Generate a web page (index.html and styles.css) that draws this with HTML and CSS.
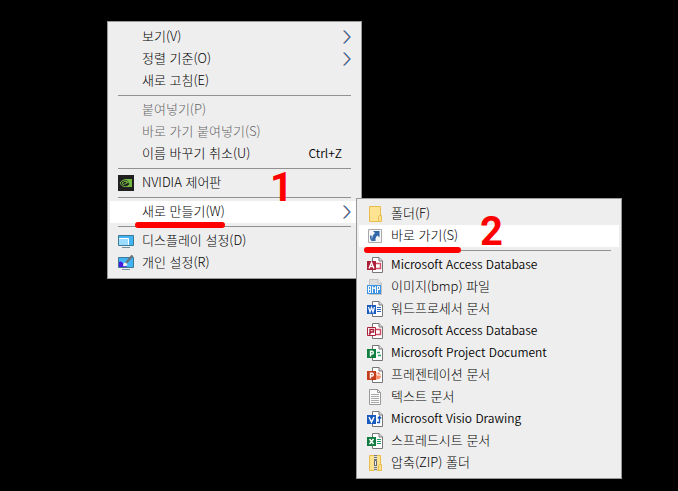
FILE: index.html
```html
<!DOCTYPE html>
<html lang="ko">
<head>
<meta charset="utf-8">
<title>새로 만들기</title>
<link rel="stylesheet" href="styles.css">
</head>
<body>
<svg class="defs" aria-hidden="true">
  <symbol id="chevron" viewBox="0 0 8 14">
    <path d="M0 .5 6 7 0 13.500" fill="none" stroke="#e8a070"/>
    <path d="M1.500 .5 7.500 7 1.500 13.500" fill="none" stroke="#1890f0"/>
    <path d="M.8 .5 6.800 7 .8 13.500" fill="none" stroke="#30285a" stroke-width=".7"/>
  </symbol>
  <symbol id="page" viewBox="0 0 16 16">
    <path d="M5.500 .5H12L15.500 4V15.500H5.500Z" fill="#fff" stroke="#777"/>
    <path d="M12 .5V4H15.500" fill="#ddd" stroke="#777"/>
  </symbol>
</svg>
<main class="desktop">
  <ul class="menu">
    <li><button class="item"><span class="icon"></span><span class="label">보기(V)</span><svg class="arrow"><use href="#chevron"/></svg></button></li>
    <li><button class="item"><span class="icon"></span><span class="label">정렬 기준(O)</span><svg class="arrow"><use href="#chevron"/></svg></button></li>
    <li><button class="item"><span class="icon"></span><span class="label">새로 고침(E)</span></button></li>
    <li class="separator"></li>
    <li><button class="item" disabled><span class="icon"></span><span class="label">붙여넣기(P)</span></button></li>
    <li><button class="item" disabled><span class="icon"></span><span class="label">바로 가기 붙여넣기(S)</span></button></li>
    <li><button class="item"><span class="icon"></span><span class="label">이름 바꾸기 취소(U)</span><span class="label latin shortcut">Ctrl+Z</span></button></li>
    <li class="separator"></li>
    <li><button class="item">
      <svg class="icon" viewBox="0 0 16 16"><path d="M0 0H16V16H0Z" fill="#202020"/><path d="M6 4H14V12H6V11Q9 12 11.500 9L10 7.500Q8 10 6 9.500V8.500Q7.500 9 8.500 7.500Q7.500 6.500 6 7V5.500Q9 5 11.500 8Q9 4.500 6 4.800Z" fill="#76b83f"/><path d="M6 5Q3.500 5.500 2 8Q3.500 11 6 11.500M6 7Q4.500 7 4 8Q4.500 9.500 6 9.500" fill="none" stroke="#76b83f"/></svg>
      <span class="label">NVIDIA 제어판</span></button></li>
    <li class="separator"></li>
    <li class="parent">
      <button class="item active"><span class="icon"></span><span class="label">새로 만들기(W)</span><svg class="arrow"><use href="#chevron"/></svg></button>
      <span class="underline first"></span><strong class="step first">1</strong>
      <ul class="menu submenu">
        <li><button class="item">
          <svg class="icon" viewBox="0 0 16 16"><path d="M2.500 .5H13.500V15.500H2.500Z" fill="#ffe391" stroke="#e9bd4d"/><path d="M11.500 15.500V11L12.500 9.500H14.500V15.500Z" fill="#ffe391" stroke="#e9bd4d"/></svg>
          <span class="label">폴더(F)</span></button></li>
        <li class="parent"><button class="item active">
          <svg class="icon" viewBox="0 0 16 16"><path d="M1.500 1.500H14.500V14.500H1.500Z" fill="#f6f6f6" stroke="#aaa"/><path d="M6 3H12.500V9.500L10.500 7.500Q8 9 8.500 13H5.500Q4 8.500 8 5Z" fill="#3267a8"/><path d="M4 7.500Q3 10.500 5.500 13" fill="none" stroke="#3267a8" stroke-width="1.500"/></svg>
          <span class="label">바로 가기(S)</span></button>
          <span class="underline second"></span><strong class="step second">2</strong></li>
        <li class="separator"></li>
        <li><button class="item">
          <svg class="icon" viewBox="0 0 16 16"><use href="#page"/><path d="M9 6.500H13.500V11.500H9" fill="none" stroke="#d34f6a" stroke-width="1.500"/><path d="M0 4H9V13H0Z" fill="#ac2039"/><path d="M2 11.500 4.500 5.500 7 11.500M3 9.500H6" fill="none" stroke="#fff" stroke-width="1.300"/></svg>
          <span class="label latin">Microsoft Access Database</span></button></li>
        <li><button class="item">
          <svg class="icon" viewBox="0 0 16 16"><path d="M2.500 .5H11L14.500 4V15.500H2.500Z" fill="#ddd" stroke="#c4c4c4"/><path d="M11 .5V4H14.500" fill="#f8f8f8" stroke="#c4c4c4"/><path d="M0 6H14V15H0Z" fill="#3f94e4"/><path d="M1.500 7.500H3.500V13.500H1.500ZM1.500 10.500H4M3.500 7.500V13.500M5.500 14V7.500L7 10 8.500 7.500V14M10.500 14V7.500H12.500V10.500H10.500" fill="none" stroke="#fff"/></svg>
          <span class="label">이미지(bmp) 파일</span></button></li>
        <li><button class="item">
          <svg class="icon" viewBox="0 0 16 16"><use href="#page"/><path d="M10 6.500H14M10 8.500H14M10 10.500H14" stroke="#2969bd"/><path d="M0 4H9V13H0Z" fill="#185abd"/><path d="M1.500 6 3 11 4.500 6.500 6 11 7.500 6" fill="none" stroke="#fff" stroke-width="1.200"/></svg>
          <span class="label">워드프로세서 문서</span></button></li>
        <li><button class="item">
          <svg class="icon" viewBox="0 0 16 16"><use href="#page"/><path d="M9 6.500H13.500V11.500H9" fill="none" stroke="#d34f6a" stroke-width="1.500"/><path d="M.5 4.500H8.500V12.500H.5Z" fill="#fff" stroke="#ac2039"/><path d="M3 11.500V6.500H6.500V9H3M2 11.500 4 9" fill="none" stroke="#ac2039" stroke-width="1.500"/></svg>
          <span class="label latin">Microsoft Access Database</span></button></li>
        <li><button class="item">
          <svg class="icon" viewBox="0 0 16 16"><use href="#page"/><path d="M10 7.500H13M11 10.500H14" stroke="#30a568" stroke-width="1.500"/><path d="M0 4H9V13H0Z" fill="#10803f"/><path d="M3.500 11.500V6.200H5Q6.300 6.200 6.300 7.700Q6.300 9 5 9H3.500" fill="none" stroke="#fff" stroke-width="1.400"/></svg>
          <span class="label latin">Microsoft Project Document</span></button></li>
        <li><button class="item">
          <svg class="icon" viewBox="0 0 16 16"><use href="#page"/><path d="M9 5Q14 5 14 9Q14 12.500 9 12.500Z" fill="#ff8f6b"/><path d="M10 4V8H14" fill="none" stroke="#fff"/><path d="M0 4H9V13H0Z" fill="#c43e1c"/><path d="M3.500 11.500V6.200H5Q6.300 6.200 6.300 7.700Q6.300 9 5 9H3.500" fill="none" stroke="#fff" stroke-width="1.400"/></svg>
          <span class="label">프레젠테이션 문서</span></button></li>
        <li><button class="item">
          <svg class="icon" viewBox="0 0 16 16"><path d="M2.500 .5H10.500L13.500 3.500V15.500H2.500Z" fill="#fafafa" stroke="#999"/><path d="M10.500 .5V3.500H13.500" fill="none" stroke="#999"/><path d="M4 5.500H12M4 7.500H12M4 9.500H12M4 11.500H12M4 13.500H12" stroke="#aaa"/></svg>
          <span class="label">텍스트 문서</span></button></li>
        <li><button class="item">
          <svg class="icon" viewBox="0 0 16 16"><use href="#page"/><path d="M10 11.500H12.500V6M10.800 7.500 12.500 5.500 14.200 7.500" fill="none" stroke="#185abd" stroke-width="1.300"/><path d="M0 4H9V13H0Z" fill="#185abd"/><path d="M2 6 4.500 11 7 6" fill="none" stroke="#fff" stroke-width="1.500"/></svg>
          <span class="label latin">Microsoft Visio Drawing</span></button></li>
        <li><button class="item">
          <svg class="icon" viewBox="0 0 16 16"><use href="#page"/><path d="M10 6.500H14M10 8.500H14M10 10.500H14" stroke="#20a060"/><path d="M0 4H9V13H0Z" fill="#107c41"/><path d="M2.500 6 6.500 11M6.500 6 2.500 11" stroke="#fff" stroke-width="1.500"/></svg>
          <span class="label">스프레드시트 문서</span></button></li>
        <li><button class="item">
          <svg class="icon" viewBox="0 0 16 16"><path d="M2.500 .5H13.500V15.500H2.500Z" fill="#ffe391" stroke="#e9bd4d"/><path d="M11.500 15.500V11L12.500 9.500H14.500V15.500Z" fill="#ffe391" stroke="#e9bd4d"/><path d="M7 0H10V16H7Z" fill="#ddd"/><path d="M8.500 0V16" stroke="#777" stroke-width="3" stroke-dasharray="1 1"/><path d="M7.500 5.500H9.500V10.500H7.500Z" fill="#eee" stroke="#666"/></svg>
          <span class="label">압축(ZIP) 폴더</span></button></li>
      </ul>
    </li>
    <li class="separator"></li>
    <li><button class="item">
      <svg class="icon" viewBox="0 0 16 16"><path d="M.5 2.500H15.500V12.500H.5Z" fill="#42b4f4" stroke="#3d7995"/><path d="M1 5.500H10.500V12H1Z" fill="#9cdcff"/><path d="M1 5.500H10.500V12" fill="none" stroke="#fff"/><path d="M4 14.500H12" stroke="#78909c"/></svg>
      <span class="label">디스플레이 설정(D)</span></button></li>
    <li><button class="item">
      <svg class="icon" viewBox="0 0 16 16"><path d="M.5 2.500H15.500V12.500H.5Z" fill="#42b4f4" stroke="#3d7995"/><path d="M1 7Q4 5 6 10L9 12H1Z" fill="#4b18e0"/><path d="M4 14.500H12" stroke="#78909c"/><path d="M5 11Q5 7.500 8 7L9.500 9Q9 12 5 11Z" fill="#f1f1f1"/><path d="M8 8 14.500 .5" stroke="#687580" stroke-width="2.500"/></svg>
      <span class="label">개인 설정(R)</span></button></li>
  </ul>
</main>
</body>
</html>
```
FILE: styles.css
```css
* {
  box-sizing: border-box;
}

body {
  margin: 0;
  background: #000;
  font-family: "Noto Sans CJK KR", sans-serif;
  font-size: 13px;
}

.defs {
  position: absolute;
  width: 0;
  height: 0;
}

.desktop {
  display: flex;
  align-items: flex-start;
  min-height: 100vh;
  padding: 21px 107px;
}

.menu {
  min-width: 255px;
  margin: 0;
  padding: 4px 2px;
  border: 1px solid #999;
  background: #eee;
  list-style: none;
}

.item {
  display: flex;
  align-items: center;
  gap: 8px;
  width: 100%;
  height: 22px;
  padding: 0 8px;
  border: 0;
  background: transparent;
  color: #000;
  font: inherit;
  font-weight: 300;
  line-height: 20px;
  text-align: left;
  white-space: nowrap;
}

.item:disabled {
  color: #666;
}

.item.active {
  background: #fff;
}

.label {
  padding-bottom: 2px;
}

.latin {
  font-size: 12px;
  font-weight: 350;
}

.icon {
  flex: none;
  width: 16px;
  height: 16px;
}

.arrow {
  width: 8px;
  height: 14px;
  margin-left: auto;
}

.shortcut {
  margin-left: auto;
  padding-right: 9px;
}

.separator {
  height: 7px;
  padding: 3px 8px;
}

.separator::before {
  display: block;
  height: 1px;
  background: #919191;
  content: "";
}

.parent {
  position: relative;
}

.submenu {
  position: absolute;
  top: -3px;
  left: calc(100% - 3px);
  min-width: 266px;
}

.underline {
  position: absolute;
  top: 21px;
  height: 6px;
  border-radius: 3px;
  background: #f00;
}

.underline.first {
  left: 25px;
  width: 90px;
}

.underline.second {
  top: 22px;
  left: 5px;
  width: 97px;
}

.step {
  position: absolute;
  color: #f00;
  font-family: Roboto, sans-serif;
  font-size: 40px;
  font-weight: 700;
  line-height: 40px;
}

.step.first {
  top: -33px;
  left: 160px;
}

.step.second {
  top: -13px;
  left: 121px;
}
```
